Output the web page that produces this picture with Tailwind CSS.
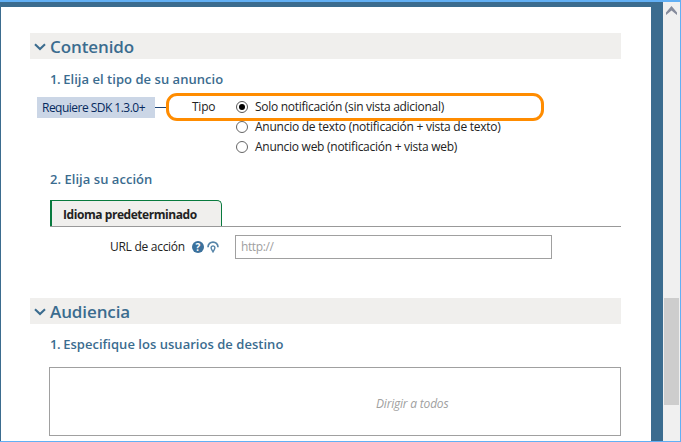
<!DOCTYPE html>
<html lang="es">
<head>
<meta charset="utf-8">
<title>Contenido</title>
<script src="https://cdn.jsdelivr.net/npm/@tailwindcss/browser@4"></script>
</head>
<body class="w-[681px] h-[442px] overflow-hidden font-['Open_Sans','Noto_Sans',sans-serif] text-[12px] text-[#222] whitespace-nowrap">
<div class="w-[681px] h-[442px] flex border-t-2 border-r border-b border-[#62b0f5] bg-[#3b6c8f]">
  <main class="ml-px mt-[5px] w-[650px] h-[434px] bg-white pl-[29px] pt-[26px] overflow-hidden">
    <header class="w-[591px] h-[26px] bg-[#f0efed] flex items-center pl-[4px] text-[#3b6c8f]">
      <svg class="w-3 h-2 mr-1 mt-[2px]" viewBox="0 0 12 8" fill="none" stroke="currentColor" stroke-width="2.1"><path d="M1 1.3 6 6l5-4.7"/></svg>
      <h1 class="text-[17px] leading-[26px] font-semibold tracking-[-0.1px] mt-[2px]">Contenido</h1>
    </header>
    <h2 class="ml-[20px] mt-[10px] h-5 leading-5 text-[13px] font-semibold tracking-[0.04px] text-[#3b6c8f]"><span class="tracking-[-0.4px]">1. </span>Elija el tipo de su anuncio</h2>
    <div class="mt-[4px] h-7 flex items-center ml-[7px]">
      <span class="w-[118px] h-[21px] leading-[21px] bg-[#cbd6e6] text-[#062a5e] pl-[5px] tracking-[-0.52px]">Requiere SDK 1.3.0+</span>
      <span class="w-[11px] h-px bg-[#1c4478]"></span>
      <div class="w-[378px] h-7 border-3 border-[#ff8c00] rounded-[11px] flex items-center">
        <span class="w-[44px] ml-[23px] tracking-[-0.25px]">Tipo</span>
        <i class="size-[12px] rounded-full border border-[#555] flex items-center justify-center"><b class="size-[6px] rounded-full bg-black"></b></i>
        <span class="ml-[7px] tracking-[-0.29px]">Solo notificación (sin vista adicional)</span>
      </div>
    </div>
    <div class="ml-[206px] h-[12px] flex items-center">
      <i class="size-[12px] rounded-full border border-[#666]"></i>
      <span class="ml-[7px] tracking-[-0.25px]">Anuncio de texto (notificación + vista de texto)</span>
    </div>
    <div class="ml-[206px] mt-[8px] h-[12px] flex items-center">
      <i class="size-[12px] rounded-full border border-[#666]"></i>
      <span class="ml-[7px] tracking-[-0.27px]">Anuncio web (notificación + vista web)</span>
    </div>
    <h2 class="ml-[20px] mt-[16px] h-5 leading-5 text-[13px] font-semibold tracking-[0.04px] text-[#3b6c8f]">2. Elija su acción</h2>
    <div class="ml-[20px] mt-[11px] w-[571px] border-b border-[#999]">
      <div class="w-[172px] h-[26px] border-l-2 border-t border-r border-[#087a3e] rounded-tr-[5px] bg-[#f0efed] pl-[11px] leading-[27px] font-bold tracking-[-0.44px]">Idioma predeterminado</div>
    </div>
    <div class="mt-[8px] h-[24px] flex items-center">
      <span class="w-[82px] ml-[80px] tracking-[-0.28px]">URL de acción</span>
      <span class="size-[12px] -mt-px rounded-full bg-[#3b719c] text-white text-[10px] leading-[12px] font-bold text-center">?</span>
      <svg class="w-3 h-3 ml-[3px]" viewBox="0 0 12 12" fill="none" stroke="#5584a8"><path stroke-width="1.7" d="M1 6.3C.9 -.6 11.1 -.6 11 6.300"/><path stroke-width="1.4" d="M4.100 6.800a1.900 1.900 0 1 1 3.800 0c0 1.300-1.100 2.200-1.900 4-.8-1.800-1.900-2.700-1.900-4Z"/></svg>
      <div class="ml-[16px] w-[317px] h-[24px] border border-[#a0a0a0] pl-[5px] leading-[22px] text-[#a0a0a0] tracking-[-0.4px]">http://</div>
    </div>
    <header class="mt-[39px] w-[591px] h-[26px] bg-[#f0efed] flex items-center pl-[4px] text-[#3b6c8f]">
      <svg class="w-3 h-2 mr-1 mt-[2px]" viewBox="0 0 12 8" fill="none" stroke="currentColor" stroke-width="2.1"><path d="M1 1.3 6 6l5-4.7"/></svg>
      <h1 class="text-[17px] leading-[26px] font-semibold tracking-[-0.1px] mt-[2px]">Audiencia</h1>
    </header>
    <h2 class="ml-[20px] mt-[10px] h-5 leading-5 text-[13px] font-semibold tracking-[0.03px] text-[#3b6c8f]"><span class="tracking-[-0.4px]">1. </span>Especifique los usuarios de destino</h2>
    <div class="ml-[19px] mt-[13px] w-[572px] h-[69px] border border-[#a0a0a0] text-[#a0a0a0] italic pl-[326px] pt-[27px] leading-[18px] tracking-[-0.2px]">Dirigir a todos</div>
  </main>
  <aside class="ml-[12px] w-[17px] bg-[#f0f0f0] flex flex-col items-center">
    <svg class="w-[13px] h-[11px] mt-[3px]" viewBox="0 0 13 11"><path fill="#858b9c" d="M1 7.5 6.5 1 12 7.5V10L6.5 5.500 1 10Z"/></svg>
    <div class="mt-[282px] w-[15px] h-[107px] bg-[#cdcdcd]"></div>
  </aside>
</div>
</body>
</html>
